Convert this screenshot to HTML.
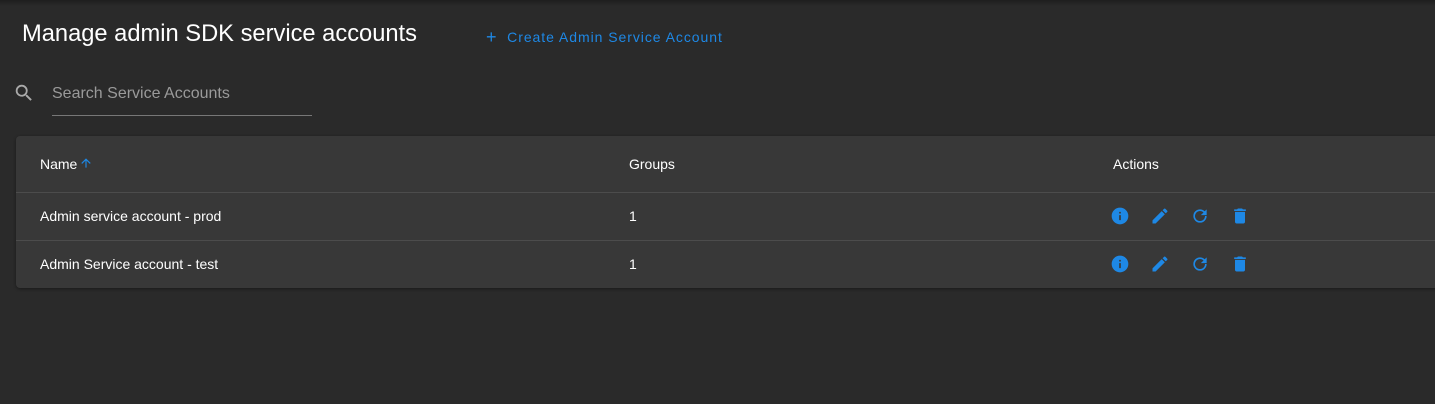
<!DOCTYPE html>
<html><head><style>
body{margin:0;width:1435px;height:404px;background:#2a2a2a;font-family:"Liberation Sans",sans-serif;color:#fff;position:relative;overflow:hidden}
.top{position:absolute;left:0;top:0;width:100%;height:6px;background:linear-gradient(#1e1e1e,#2a2a2a)}
h1{position:absolute;left:22px;top:21px;margin:0;font-size:23.7px;font-weight:normal;color:#fff}
.create{position:absolute;left:486px;top:27px;font-size:14px;color:#1e88e5;letter-spacing:.95px}
.search{position:absolute;left:52px;top:85px;font-size:16px;color:#9a9a9a}
.line{position:absolute;left:52px;top:115px;width:260px;height:1px;background:#777}
.table{position:absolute;left:16px;top:136px;width:1430px;height:152px;background:#383838;border-radius:4px;box-shadow:0 1px 3px rgba(0,0,0,.4)}
.row{position:absolute;left:0;width:100%;border-bottom:1px solid #4c4c4c;font-size:14px}
.c{position:absolute}
svg{position:absolute;width:20px;height:20px;fill:#1e88e5}
</style></head><body>
<div class="top"></div>
<h1>Manage admin SDK service accounts</h1>
<div class="create"><span style="font-size:18px;vertical-align:-1px">+</span>&nbsp;&nbsp;Create Admin Service Account</div>
<svg style="left:13px;top:82px;width:22px;height:22px;fill:#aaa" viewBox="0 0 24 24"><path d="M15.5 14h-.79l-.28-.27A6.47 6.47 0 0016 9.5 6.5 6.5 0 109.5 16c1.61 0 3.09-.59 4.23-1.57l.27.28v.79l5 4.99L20.49 19l-4.99-5zm-6 0C7.01 14 5 11.99 5 9.5S7.01 5 9.5 5 14 7.01 14 9.5 11.99 14 9.5 14z"/></svg>
<div class="search">Search Service Accounts</div>
<div class="line"></div>
<div class="table">
<div class="row" style="top:0;height:56px;font-weight:500">
<div class="c" style="left:24px;top:20px">Name</div>
<svg style="left:63px;top:20px;width:14px;height:14px" viewBox="0 0 24 24"><path d="M4 12l1.41 1.41L11 7.83V20h2V7.83l5.58 5.59L20 12l-8-8-8 8z"/></svg>
<div class="c" style="left:613px;top:20px">Groups</div>
<div class="c" style="left:1097px;top:20px">Actions</div>
</div>
<div class="row" style="top:56px;height:48px">
<div class="c" style="left:24px;top:16px">Admin service account - prod</div>
<div class="c" style="left:613px;top:16px">1</div>
</div>
<div class="row" style="top:104px;height:48px;border:none">
<div class="c" style="left:24px;top:16px">Admin Service account - test</div>
<div class="c" style="left:613px;top:16px">1</div>
</div>
</div>
<svg style="left:1110px;top:206px" viewBox="0 0 24 24"><path d="M12 2C6.48 2 2 6.48 2 12s4.48 10 10 10 10-4.48 10-10S17.52 2 12 2zm1 15h-2v-6h2v6zm0-8h-2V7h2v2z"/></svg>
<svg style="left:1150px;top:206px" viewBox="0 0 24 24"><path d="M3 17.25V21h3.75L17.81 9.94l-3.75-3.75L3 17.25zM20.71 7.04a1 1 0 000-1.41l-2.34-2.34a1 1 0 00-1.41 0l-1.830 1.83 3.75 3.75 1.83-1.83z"/></svg>
<svg style="left:1190px;top:206px" viewBox="0 0 24 24"><path d="M17.65 6.35A7.96 7.96 0 0012 4a8 8 0 108 8h-2a6 6 0 11-1.78-4.22L13 11h7V4l-2.35 2.35z"/></svg>
<svg style="left:1230px;top:206px" viewBox="0 0 24 24"><path d="M6 19c0 1.1.9 2 2 2h8c1.1 0 2-.9 2-2V7H6v12zM19 4h-3.5l-1-1h-5l-1 1H5v2h14V4z"/></svg>
<svg style="left:1110px;top:254px" viewBox="0 0 24 24"><path d="M12 2C6.48 2 2 6.48 2 12s4.48 10 10 10 10-4.48 10-10S17.52 2 12 2zm1 15h-2v-6h2v6zm0-8h-2V7h2v2z"/></svg>
<svg style="left:1150px;top:254px" viewBox="0 0 24 24"><path d="M3 17.25V21h3.75L17.81 9.94l-3.75-3.75L3 17.25zM20.71 7.04a1 1 0 000-1.41l-2.34-2.34a1 1 0 00-1.41 0l-1.83 1.83 3.75 3.75 1.83-1.83z"/></svg>
<svg style="left:1190px;top:254px" viewBox="0 0 24 24"><path d="M17.65 6.35A7.96 7.96 0 0012 4a8 8 0 108 8h-2a6 6 0 11-1.78-4.22L13 11h7V4l-2.35 2.35z"/></svg>
<svg style="left:1230px;top:254px" viewBox="0 0 24 24"><path d="M6 19c0 1.1.9 2 2 2h8c1.1 0 2-.9 2-2V7H6v12zM19 4h-3.5l-1-1h-5l-1 1H5v2h14V4z"/></svg>
</body></html>
